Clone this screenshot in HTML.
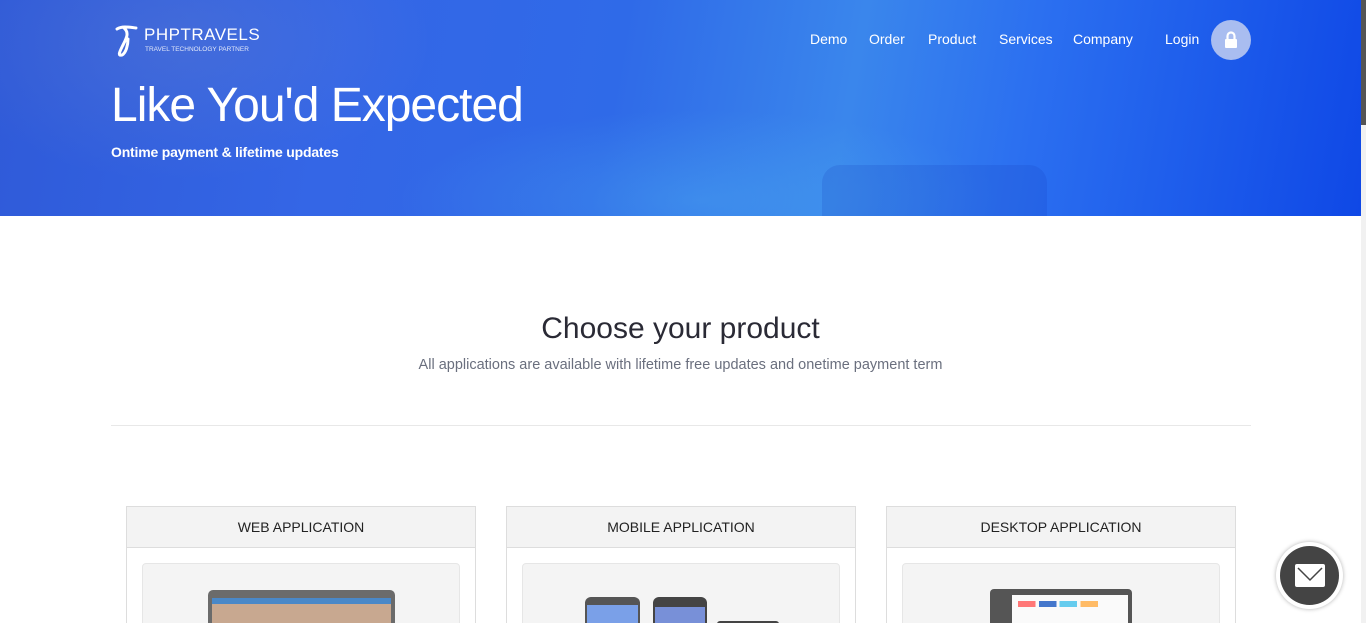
<!DOCTYPE html>
<html><head><meta charset="utf-8"><style>
*{margin:0;padding:0;box-sizing:border-box}
html,body{width:1366px;height:623px;overflow:hidden}
body{background:#fff;font-family:"Liberation Sans",sans-serif;position:relative}
.hero{position:absolute;left:0;top:0;width:1361px;height:216px;
background:linear-gradient(100deg,#2f5ad8 0%,#3466e6 25%,#2f6ae8 45%,#3a86ec 62%,#2b6ff0 75%,#0f48e6 100%);overflow:hidden}
.hero:before{content:"";position:absolute;left:0;top:0;right:0;bottom:0;
background:radial-gradient(ellipse 300px 90px at 700px 200px,rgba(80,180,240,.35),transparent),radial-gradient(ellipse 250px 140px at 180px 40px,rgba(120,140,200,.25),transparent)}
.lug{position:absolute;left:822px;top:165px;width:225px;height:51px;background:rgba(20,60,190,.18);border-radius:18px 18px 0 0}
.nav{position:absolute;top:31px;color:#fff;font-size:14px}
.logo{position:absolute;left:114px;top:25px;color:#fff}
.logo b{position:absolute;left:30px;top:0;font-size:17px;font-weight:normal;letter-spacing:.5px;white-space:nowrap}
.logo small{position:absolute;left:31px;top:21px;font-size:6.5px;white-space:nowrap;opacity:.85}
h1{position:absolute;left:111px;top:78px;color:#fff;font-weight:normal;font-size:48px;letter-spacing:-1px;white-space:nowrap}
.sub{position:absolute;left:111px;top:144px;color:#fff;font-size:14px;font-weight:bold;letter-spacing:-.2px}
.lock{position:absolute;left:1211px;top:20px;width:40px;height:40px;border-radius:50%;background:#a9bdf0}
.sb{position:absolute;left:1361px;top:0;width:5px;height:623px;background:#f1f1f1}
.sb i{position:absolute;left:0;top:0;width:5px;height:125px;background:#555}
h2{position:absolute;left:0;width:1361px;text-align:center;top:312px;font-weight:normal;font-size:30px;color:#2a2a35}
.p{position:absolute;left:0;width:1361px;text-align:center;top:357px;font-size:14.5px;color:#6a6f7e}
.hr{position:absolute;left:111px;top:425px;width:1140px;height:1px;background:#e8e8e8}
.card{position:absolute;top:506px;width:350px;height:117px;border:1px solid #ddd;border-bottom:0;background:#fff;overflow:hidden}
.card .h{height:41px;background:#f3f3f3;border-bottom:1px solid #ddd;text-align:center;line-height:41px;font-size:14px;color:#222}
.card .in{position:absolute;left:15px;top:56px;width:318px;height:70px;background:#f4f4f4;border:1px solid #e6e6e6;border-radius:4px;overflow:hidden}
.mail{position:absolute;left:1276px;top:542px;width:67px;height:67px;border-radius:50%;background:#fff;box-shadow:0 0 4px rgba(0,0,0,.3)}
.mail i{position:absolute;left:4px;top:4px;width:59px;height:59px;border-radius:50%;background:#444}
</style></head><body>
<div class="hero"><div class="lug"></div>
<div class="logo"><svg width="26" height="32" viewBox="0 0 26 32" style="position:absolute;left:0;top:0"><path d="M3 4 C8 1 14 2 22 3 M10 3 C16 8 12 14 8 22 C5 28 4 31 8 30 C12 28 14 20 14 14" stroke="#fff" stroke-width="3" fill="none" stroke-linecap="round"/></svg><b>PHPTRAVELS</b><small>TRAVEL TECHNOLOGY PARTNER</small></div>
<div class="nav" style="left:810px">Demo</div>
<div class="nav" style="left:869px">Order</div>
<div class="nav" style="left:928px">Product</div>
<div class="nav" style="left:999px">Services</div>
<div class="nav" style="left:1073px">Company</div>
<div class="nav" style="left:1165px">Login</div>
<div class="lock"><svg width="40" height="40" viewBox="0 0 40 40"><rect x="14" y="19" width="12" height="9" rx="1" fill="#fff"/><path d="M16.5 19v-3a3.5 3.5 0 0 1 7 0v3" stroke="#fff" stroke-width="2.2" fill="none"/></svg></div>
<h1>Like You'd Expected</h1>
<div class="sub">Ontime payment &amp; lifetime updates</div>
</div>
<div class="sb"><i></i></div>
<h2>Choose your product</h2>
<div class="p">All applications are available with lifetime free updates and onetime payment term</div>
<div class="hr"></div>
<div class="card" style="left:126px"><div class="h">WEB APPLICATION</div><div class="in"><div style="position:absolute;left:65px;top:26px;width:187px;height:60px;background:#6b6b6b;border-radius:5px 5px 0 0"><div style="margin:6px 4px 0;height:54px;background:#fff"><div style="height:6px;margin-top:8px;background:#4a88c8"></div><div style="height:30px;background:#c8a890"></div></div></div></div></div>
<div class="card" style="left:506px"><div class="h">MOBILE APPLICATION</div><div class="in"><div style="position:absolute;left:62px;top:33px;width:55px;height:60px;background:#555;border-radius:6px"><div style="margin:8px 2px 0;height:50px;background:#7aa0e8"></div></div><div style="position:absolute;left:130px;top:33px;width:54px;height:60px;background:#444;border-radius:6px"><div style="margin:10px 2px 0;height:48px;background:#7890d8"></div></div><div style="position:absolute;left:194px;top:57px;width:62px;height:40px;background:#444;border-radius:3px"></div></div></div>
<div class="card" style="left:886px"><div class="h">DESKTOP APPLICATION</div><div class="in"><div style="position:absolute;left:87px;top:25px;width:142px;height:60px;background:#555;border-radius:4px"><div style="margin:6px 4px 0 22px;height:54px;background:#fafafa;position:relative"><div style="position:absolute;left:6px;top:6px;width:80px;height:6px;background:linear-gradient(90deg,#f77 0 22%,transparent 22% 26%,#47c 26% 48%,transparent 48% 52%,#6ce 52% 74%,transparent 74% 78%,#fb6 78% 100%)"></div></div></div></div></div>
<div class="mail"><i><svg width="59" height="59" viewBox="0 0 59 59"><rect x="15" y="18" width="30" height="23" rx="2" fill="#fff"/><path d="M18 22l12 12 12-12" stroke="#444" stroke-width="1.5" fill="none"/></svg></i></div>
</body></html>
